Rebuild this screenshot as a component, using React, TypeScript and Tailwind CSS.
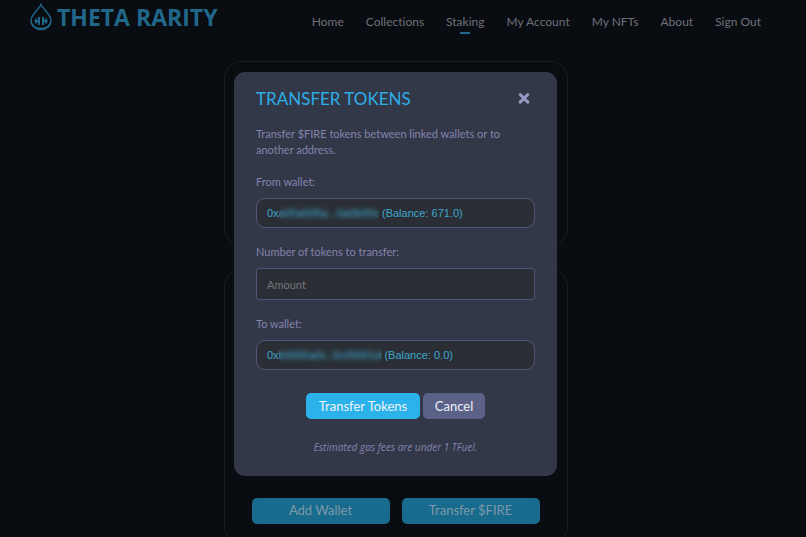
import { useState } from "react";

const navItems = ["Home", "Collections", "Staking", "My Account", "My NFTs", "About", "Sign Out"];

function Logo() {
  return (
    <a href="#home" className="flex items-center gap-1 text-[#20678a]">
      <svg viewBox="0 0 24 28" className="h-7 w-6" fill="none" stroke="currentColor" aria-hidden="true">
        <path d="M12 1.5C10.3 6 2 11.6 2 17.6a10 9 0 0 0 20 0C22 11.6 13.7 6 12 1.5Z" strokeWidth="1.4" />
        <path d="M3 20.5a9.6 7.6 0 0 0 18 0" strokeWidth="1.4" />
        <path d="M10 14v8M14 14v8" strokeWidth="2" />
        <path d="M5.4 18h4.6M14 18h4.6" strokeWidth="2" />
        <path d="M7 15.5v5M17 15.5v5" strokeWidth="1.8" />
      </svg>
      <span className="font-['Open_Sans',sans-serif] text-[23px] leading-7 font-bold whitespace-nowrap">
        THETA RARITY
      </span>
    </a>
  );
}

function Header() {
  return (
    <header className="flex items-start justify-between pr-[30px] pl-[29px]">
      <div className="pt-[3px]">
        <Logo />
      </div>
      <nav className="flex gap-[22px] pt-3 text-[12px] leading-5 text-[#6f717a]">
        {navItems.map((item) => (
          <a key={item} href={"#" + item} className="flex flex-col items-center whitespace-nowrap">
            {item}
            {item === "Staking" && <span className="h-0.5 w-2.5 bg-[#20678a]" />}
          </a>
        ))}
      </nav>
    </header>
  );
}

type WalletProps = { id: string; label: string; address: string; balance: string; maskClass: string };

function WalletSelect({ id, label, address, balance, maskClass }: WalletProps) {
  return (
    <div className="flex flex-col gap-2">
      <label htmlFor={id}>{label}</label>
      <div className="relative">
        <select
          id={id}
          className="block h-[30px] w-full appearance-none rounded-[9px] border border-[#50567a] bg-[#2b2f35] px-2.5 font-['Liberation_Sans',Arial,sans-serif] text-[11px] text-[#3da5cd]"
        >
          <option>{`0x${address} (Balance: ${balance})`}</option>
        </select>
        <span className={`pointer-events-none absolute inset-y-1.5 left-[23px] backdrop-blur-[2px] ${maskClass}`} />
      </div>
    </div>
  );
}

function TransferDialog() {
  const [amount, setAmount] = useState("");
  return (
    <div
      role="dialog"
      aria-labelledby="transfer-title"
      className="w-[323px] rounded-[11px] bg-[#323848] px-[22px] pt-4 pb-[21px] text-[11px] leading-4 text-[#8583ac]"
    >
      <div className="flex items-center justify-between pr-1">
        <h2 id="transfer-title" className="text-[17px] leading-[22px] text-[#2eaee6]">
          TRANSFER TOKENS
        </h2>
        <button type="button" aria-label="Close" className="text-[#9a9ac4]">
          <svg viewBox="0 0 14 14" className="size-3.5" stroke="currentColor" strokeWidth="3" strokeLinecap="round">
            <path d="M3.2 2.5l7.6 7.6M10.8 2.5l-7.6 7.6" />
          </svg>
        </button>
      </div>
      <p className="mt-4 pr-4">Transfer $FIRE tokens between linked wallets or to another address.</p>
      <form className="mt-4" onSubmit={(e) => e.preventDefault()}>
        <WalletSelect id="from" label="From wallet:" address="a00a000a...0a0b00c" balance="671.0" maskClass="w-[100px]" />
        <div className="mt-4 flex flex-col gap-2">
          <label htmlFor="amount">Number of tokens to transfer:</label>
          <input
            id="amount"
            value={amount}
            onChange={(e) => setAmount(e.target.value)}
            placeholder="Amount"
            className="h-8 w-full rounded-[3px] border border-[#50567a] bg-[#2b2f35] px-2.5 text-[11px] text-[#3da5cd] placeholder:text-[#737479]"
          />
        </div>
        <div className="mt-4">
          <WalletSelect id="to" label="To wallet:" address="b0000a0c..0c00001d" balance="0.0" maskClass="w-[103px]" />
        </div>
        <div className="mt-[23px] flex justify-center gap-[3px] text-[13px] leading-[26px] text-[#eef2fa]">
          <button type="submit" className="h-[26px] w-[114px] rounded-[5px] bg-[#2bb2eb]">Transfer Tokens</button>
          <button type="button" className="h-[26px] w-[62px] rounded-[5px] bg-[#5c6287]">Cancel</button>
        </div>
      </form>
      <p className="mt-5 text-center font-['Open_Sans',sans-serif] text-[10px] italic">
        Estimated gas fees are under 1 TFuel.
      </p>
    </div>
  );
}

export default function App() {
  return (
    <div className="relative h-screen overflow-hidden bg-[#090c11] pr-[15px] font-['Lato',sans-serif] [font-variant-ligatures:none]">
      <Header />
      <main className="mx-auto mt-[27px] flex w-[344px] flex-col gap-[23px]">
        <section className="h-[185px] rounded-[18px] border border-[#1b1e23]" />
        <section className="flex h-[275px] items-end gap-3 rounded-[18px] border border-[#1b1e23] px-[27px] pb-[19px] text-[13px] text-[#7b99a8]">
          <button type="button" className="h-[26px] flex-1 rounded-[5px] bg-[#196b8d]">Add Wallet</button>
          <button type="button" className="h-[26px] flex-1 rounded-[5px] bg-[#196b8d]">Transfer $FIRE</button>
        </section>
      </main>
      <div className="absolute inset-0 flex items-start justify-center pt-[72px] pr-[15px]">
        <TransferDialog />
      </div>
    </div>
  );
}
